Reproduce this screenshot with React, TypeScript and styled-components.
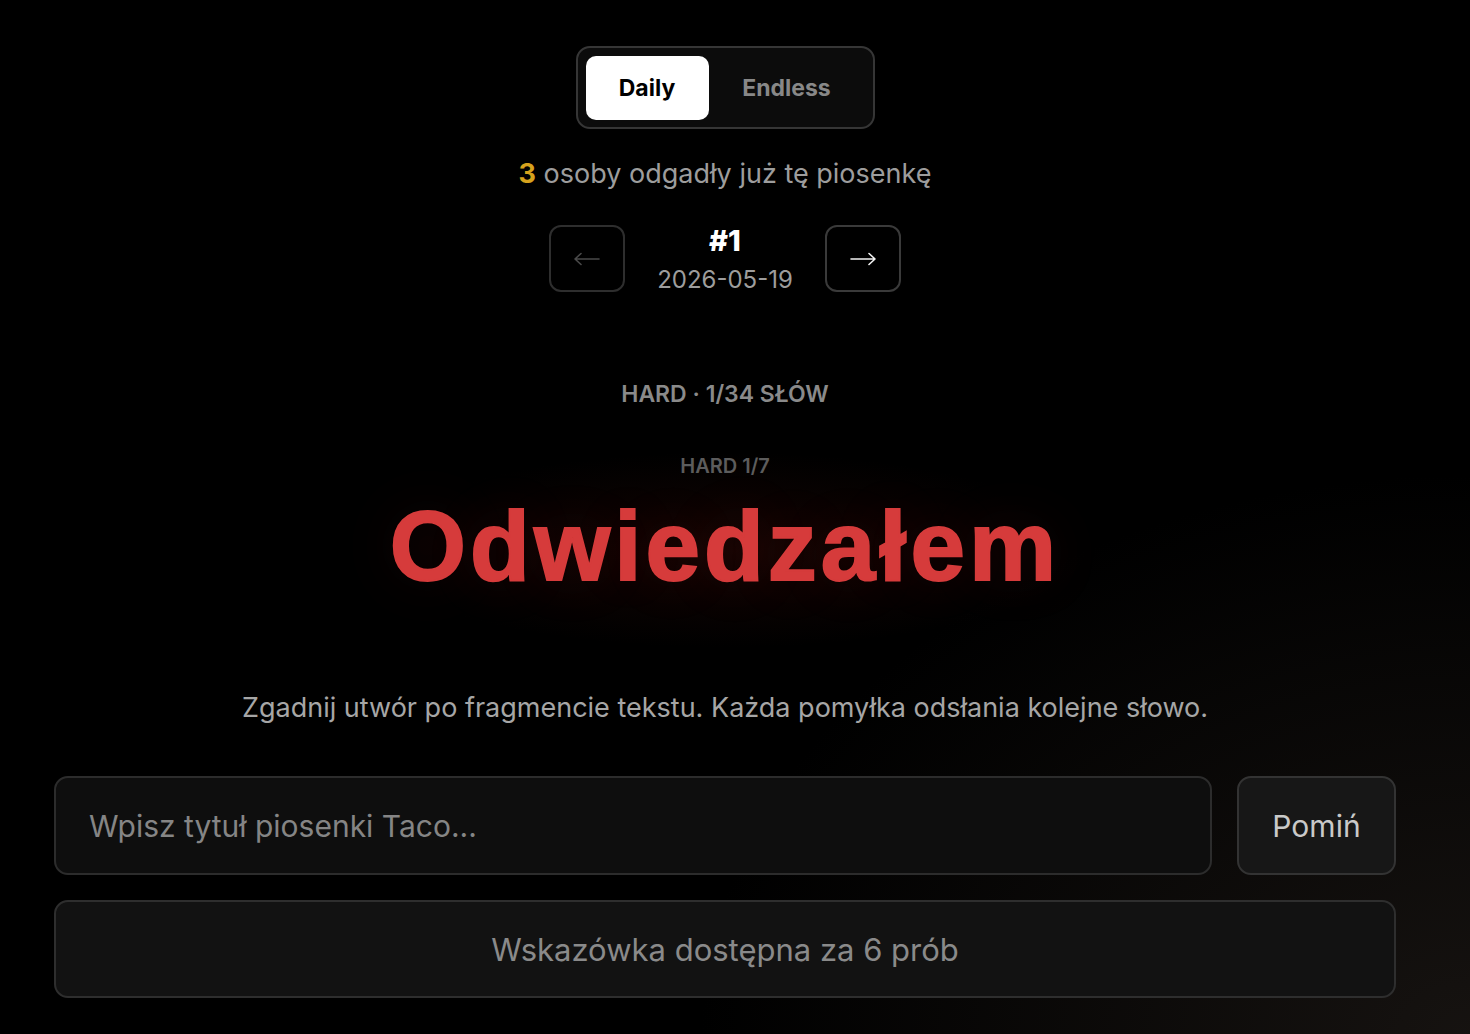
import React, { useState } from "react";
import styled, { createGlobalStyle } from "styled-components";

const GlobalStyle = createGlobalStyle`
  html, body {
    margin: 0;
    padding: 0;
    background: #000;
  }
  body {
    font-family: Inter, "Noto Sans", sans-serif;
    color: #fff;
  }
  * { box-sizing: border-box; }
`;

const Page = styled.div`
  min-height: 1034px;
  width: 1470px;
  overflow: hidden;
  background:
    radial-gradient(ellipse 520px 140px at 725px 550px, rgba(120, 30, 20, 0.16), transparent 70%),
    radial-gradient(ellipse 1100px 800px at 1470px 1034px, rgba(40, 34, 30, 0.55), transparent 70%),
    #000;
`;

const Main = styled.main`
  width: 1342px;
  margin-left: 54px;
  padding-top: 46px;
  display: flex;
  flex-direction: column;
  align-items: center;
`;

const Toggle = styled.div`
  display: flex;
  align-items: center;
  padding: 8px;
  width: 299px;
  height: 83px;
  border: 2px solid #363636;
  border-radius: 14px;
  background: #0c0c0c;
`;

const ToggleButton = styled.button<{ $active?: boolean }>`
  height: 64px;
  border: none;
  border-radius: 10px;
  font-family: Inter, sans-serif;
  font-weight: 700;
  font-size: 23px;
  cursor: pointer;
  background: ${(p) => (p.$active ? "#fff" : "transparent")};
  color: ${(p) => (p.$active ? "#000" : "#888")};
  margin-left: ${(p) => (p.$active ? "0" : "8px")};
  width: ${(p) => (p.$active ? "123px" : "140px")};
`;

const Solved = styled.p`
  margin: 28px 0 0;
  font-size: 27px;
  line-height: 34px;
  color: #9d9d9d;
`;

const Count = styled.span`
  color: #d6a21d;
  font-weight: 700;
`;

const NavRow = styled.div`
  margin-top: 33px;
  display: flex;
  align-items: center;
  gap: 31px;
`;

const NavButton = styled.button<{ $dim?: boolean }>`
  width: 76px;
  height: 67px;
  border: 2px solid ${(p) => (p.$dim ? "#2e2e2e" : "#3a3a3a")};
  border-radius: 12px;
  background: transparent;
  color: ${(p) => (p.$dim ? "#4a4a4a" : "#f2f2f2")};
  display: flex;
  align-items: center;
  justify-content: center;
  cursor: pointer;
  padding: 0;
`;

const DayInfo = styled.div`
  width: 138px;
  display: flex;
  flex-direction: column;
  align-items: center;
  white-space: nowrap;
`;

const DayNumber = styled.div`
  font-size: 29px;
  font-weight: 800;
  line-height: 34px;
  color: #fff;
`;

const DayDate = styled.div`
  font-size: 24px;
  line-height: 26px;
  color: #9d9d9d;
  margin-top: 9px;
`;

const Level = styled.div`
  margin-top: 86px;
  font-size: 23px;
  font-weight: 600;
  line-height: 30px;
  color: #8a8a8a;
`;

const SubLevel = styled.div`
  margin-top: 45px;
  font-size: 20px;
  font-weight: 600;
  line-height: 24px;
  color: #5c5c5c;
`;

const Word = styled.h1`
  margin: 13px 0 0;
  font-family: "Liberation Sans", Arial, sans-serif;
  font-weight: 700;
  font-size: 98px;
  line-height: 110px;
  letter-spacing: 4px;
  -webkit-text-stroke: 2px #d63b3b;
  color: #d63b3b;
  text-shadow: 0 0 60px rgba(214, 59, 59, 0.12);
`;

const Description = styled.p`
  margin: 90px 0 0;
  font-size: 27px;
  line-height: 34px;
  color: #a6a6a6;
`;

const GuessRow = styled.div`
  margin-top: 51px;
  width: 100%;
  display: flex;
  gap: 25px;
`;

const GuessInput = styled.input`
  flex: 1;
  height: 99px;
  padding: 0 33px;
  border: 2px solid #2c2c2c;
  border-radius: 14px;
  background: #0e0e0e;
  color: #eee;
  font-family: Inter, sans-serif;
  font-size: 30px;
  outline: none;
  &::placeholder {
    color: #858585;
  }
`;

const SkipButton = styled.button`
  width: 159px;
  height: 99px;
  border: 2px solid #333;
  border-radius: 14px;
  background: #171717;
  color: #c9c9c9;
  font-family: Inter, sans-serif;
  font-size: 30px;
  cursor: pointer;
`;

const Hint = styled.div`
  margin-top: 25px;
  width: 100%;
  height: 98px;
  border: 2px solid #2e2e2e;
  border-radius: 14px;
  background: #121212;
  color: #8a8a8a;
  font-size: 31px;
  display: flex;
  align-items: center;
  justify-content: center;
`;

function Arrow({ dir }: { dir: "left" | "right" }) {
  const d = dir === "right" ? "M1 7h24M19 1.5l6 5.5-6 5.5" : "M25 7H1M7 1.5L1 7l6 5.5";
  return (
    <svg width="26" height="14" viewBox="0 0 26 14" fill="none">
      <path d={d} stroke="currentColor" strokeWidth="1.6" strokeLinecap="round" strokeLinejoin="round" />
    </svg>
  );
}

export default function App() {
  const [mode, setMode] = useState<"daily" | "endless">("daily");
  const [guess, setGuess] = useState("");

  return (
    <>
      <GlobalStyle />
      <Page>
        <Main>
          <Toggle>
            <ToggleButton $active={mode === "daily"} onClick={() => setMode("daily")}>
              Daily
            </ToggleButton>
            <ToggleButton $active={mode === "endless"} onClick={() => setMode("endless")}>
              Endless
            </ToggleButton>
          </Toggle>

          <Solved>
            <Count>3</Count> osoby odgadły już tę piosenkę
          </Solved>

          <NavRow>
            <NavButton $dim aria-label="Poprzedni">
              <Arrow dir="left" />
            </NavButton>
            <DayInfo>
              <DayNumber>#1</DayNumber>
              <DayDate>2026-05-19</DayDate>
            </DayInfo>
            <NavButton aria-label="Następny">
              <Arrow dir="right" />
            </NavButton>
          </NavRow>

          <Level>HARD · 1/34 SŁÓW</Level>
          <SubLevel>HARD 1/7</SubLevel>
          <Word>Odwiedzałem</Word>

          <Description>
            Zgadnij utwór po fragmencie tekstu. Każda pomyłka odsłania kolejne słowo.
          </Description>

          <GuessRow>
            <GuessInput
              value={guess}
              onChange={(e) => setGuess(e.target.value)}
              placeholder="Wpisz tytuł piosenki Taco..."
            />
            <SkipButton>Pomiń</SkipButton>
          </GuessRow>

          <Hint>Wskazówka dostępna za 6 prób</Hint>
        </Main>
      </Page>
    </>
  );
}
